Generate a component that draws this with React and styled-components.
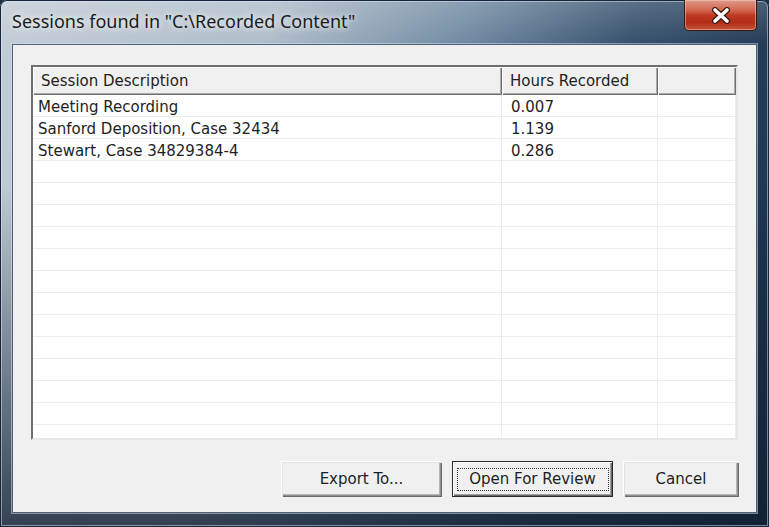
import React from 'react';
import styled, { createGlobalStyle } from 'styled-components';

const Global = createGlobalStyle`
  html, body { margin: 0; padding: 0; width: 769px; height: 527px; overflow: hidden; background: #1d2f44; }
  #root { width: 769px; height: 527px; }
  * { box-sizing: border-box; }
`;

const Window = styled.div`
  width: 769px;
  height: 527px;
  display: flex;
  flex-direction: column;
  padding: 0 12px 14px 12px;
  border-radius: 7px 7px 0 0;
  background:
    linear-gradient(to bottom, rgba(255,255,255,0.18) 0px, rgba(255,255,255,0) 46px),
    linear-gradient(to bottom, rgba(0,0,0,0) 35%, rgba(18,32,50,0.8) 100%),
    linear-gradient(100deg, #c2ccd6 0%, #aebcc9 32%, #6f89a1 55%, #35506c 74%, #172d47 100%);
  box-shadow: inset 0 0 0 1px #17263a, inset 0 0 0 2px rgba(220,232,245,0.5);
`;

const TitleBar = styled.div`
  height: 44px;
  flex: none;
  display: flex;
  justify-content: space-between;
  align-items: flex-start;
`;

const Title = styled.div`
  margin-top: 9px;
  font-family: "Noto Sans", "DejaVu Sans", sans-serif;
  font-size: 18px;
  line-height: 24px;
  color: #1b1b1b;
  text-shadow: 0 0 6px rgba(255,255,255,0.9), 0 0 10px rgba(255,255,255,0.6);
  white-space: nowrap;
`;

const CloseButton = styled.div`
  width: 73px;
  height: 31px;
  display: flex;
  align-items: center;
  justify-content: center;
  border: 1px solid #3a1710;
  border-top: none;
  border-radius: 0 0 5px 5px;
  background: linear-gradient(to bottom, #e0998a 0%, #d2654d 35%, #be3820 52%, #b22d18 75%, #c9543a 100%);
  box-shadow: inset 0 0 0 1px rgba(255,215,205,0.45);
`;

const Client = styled.div`
  flex: 1;
  min-height: 0;
  display: flex;
  flex-direction: column;
  gap: 21px;
  padding: 20px 18px 15px 18px;
  background: #f0f0f0;
  border: 1px solid #4d6278;
  box-shadow: 0 0 0 1px rgba(215,228,240,0.5);
`;

const List = styled.div`
  flex: 1;
  min-height: 0;
  display: flex;
  flex-direction: column;
  overflow: hidden;
  background: #fff;
  border-style: solid;
  border-width: 2px;
  border-color: #6f6f6f #e6e6e6 #e6e6e6 #6f6f6f;
  font-family: "DejaVu Sans", sans-serif;
  font-size: 15px;
  color: #1e1e1e;
`;

const Columns = `469px 156px 1fr`;

const HeaderRow = styled.div`
  display: grid;
  grid-template-columns: ${Columns};
  height: 28px;
  flex: none;
  background: #f0f0f0;
`;

const HeaderCell = styled.div`
  display: flex;
  align-items: center;
  padding-left: ${p => p.$pad}px;
  box-shadow: inset 1px 1px #ffffff, inset -1px -1px #6f6f6f, inset -2px -2px #a9a9a9;
  white-space: nowrap;
`;

const Row = styled.div`
  display: grid;
  grid-template-columns: ${Columns};
  height: 22px;
  flex: none;
`;

const Cell = styled.div`
  display: flex;
  align-items: center;
  padding-left: ${p => p.$pad}px;
  padding-top: 2px;
  border-bottom: 1px solid #ececec;
  border-right: 1px solid #ececec;
  white-space: nowrap;
`;

const ButtonRow = styled.div`
  flex: none;
  display: flex;
  justify-content: flex-end;
  gap: 10px;
  margin-right: -1px;
`;

const Button = styled.div`
  width: ${p => p.$w}px;
  height: 36px;
  display: flex;
  align-items: center;
  justify-content: center;
  position: relative;
  font-family: "DejaVu Sans", sans-serif;
  font-size: 15px;
  color: #1e1e1e;
  background: #f0f0f0;
  ${p => p.$default
    ? `border: 1px solid #2a2a2a; box-shadow: inset 1px 1px #ffffff, inset -1px -1px #6a6a6a, inset -2px -2px #a0a0a0;`
    : `box-shadow: inset 1px 1px #ffffff, inset 2px 2px #e3e3e3, inset -1px -1px #6a6a6a, inset -2px -2px #8f8f8f, inset -3px -3px #b5b5b5;`}
`;

const FocusRing = styled.span`
  position: absolute;
  left: 4px;
  right: 3px;
  top: 6px;
  bottom: 5px;
  border: 1px dotted #333;
  pointer-events: none;
`;

const rows = [
  ['Meeting Recording', '0.007'],
  ['Sanford Deposition, Case 32434', '1.139'],
  ['Stewart, Case 34829384-4', '0.286'],
];
while (rows.length < 16) rows.push(['', '']);

export default function App() {
  return (
    <>
      <Global />
      <Window>
        <TitleBar>
          <Title>Sessions found in "C:\Recorded Content"</Title>
          <CloseButton>
            <svg width="22" height="17" viewBox="0 0 22 17">
              <path d="M5 3 L17 14 M17 3 L5 14" stroke="#3b1810" strokeWidth="6" strokeLinecap="round" fill="none" />
              <path d="M5 3 L17 14 M17 3 L5 14" stroke="#ffffff" strokeWidth="3.6" strokeLinecap="round" fill="none" />
            </svg>
          </CloseButton>
        </TitleBar>
        <Client>
          <List>
            <HeaderRow>
              <HeaderCell $pad={8}>Session Description</HeaderCell>
              <HeaderCell $pad={8}>Hours Recorded</HeaderCell>
              <HeaderCell $pad={8}></HeaderCell>
            </HeaderRow>
            {rows.map((r, i) => (
              <Row key={i}>
                <Cell $pad={5}>{r[0]}</Cell>
                <Cell $pad={9}>{r[1]}</Cell>
                <Cell $pad={5}></Cell>
              </Row>
            ))}
          </List>
          <ButtonRow>
            <Button $w={161}>Export To...</Button>
            <Button $w={161} $default>
              Open For Review
              <FocusRing />
            </Button>
            <Button $w={116}>Cancel</Button>
          </ButtonRow>
        </Client>
      </Window>
    </>
  );
}
